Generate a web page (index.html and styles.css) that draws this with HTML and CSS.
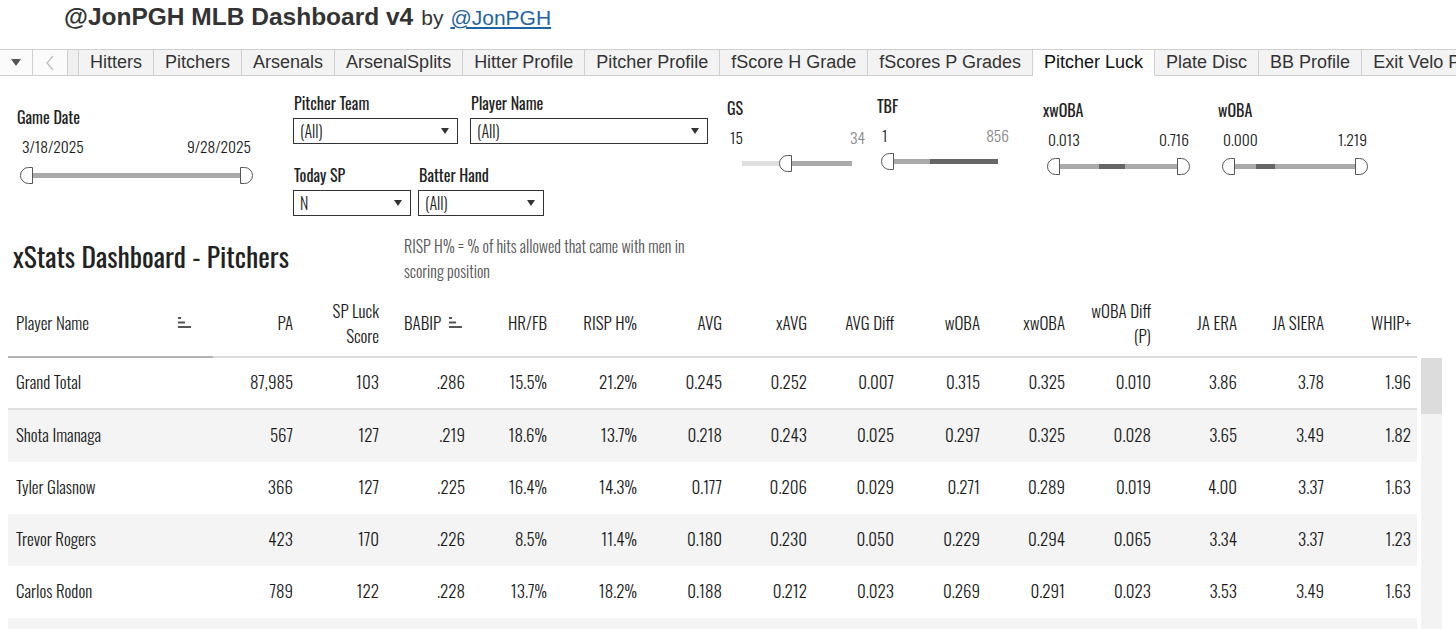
FILE: index.html
```html
<!DOCTYPE html>
<html>
<head>
<meta charset="utf-8">
<title>@JonPGH MLB Dashboard v4</title>
<link rel="stylesheet" href="styles.css">
</head>
<body>
<div class="title">
  <span class="t-main">@JonPGH MLB Dashboard v4</span><span class="t-by">by</span><a class="t-link" href="#">@JonPGH</a>
</div>

<div class="tabbar">
  <div class="tb-ctl tb-menu">
    <svg width="10" height="8" viewBox="0 0 10 8"><path d="M0 0 H10 L5 7 Z" fill="#555"/></svg>
  </div>
  <div class="tb-ctl tb-prev">
    <svg width="8" height="16" viewBox="0 0 8 16"><path d="M7 1 L1 8 L7 15" fill="none" stroke="#bbb" stroke-width="1.2"/></svg>
  </div>
  <div class="tb-gap"></div>
  <div class="tab">Hitters</div>
  <div class="tab">Pitchers</div>
  <div class="tab">Arsenals</div>
  <div class="tab">ArsenalSplits</div>
  <div class="tab">Hitter Profile</div>
  <div class="tab">Pitcher Profile</div>
  <div class="tab">fScore H Grade</div>
  <div class="tab">fScores P Grades</div>
  <div class="tab active">Pitcher Luck</div>
  <div class="tab">Plate Disc</div>
  <div class="tab">BB Profile</div>
  <div class="tab">Exit Velo Profile</div>
</div>

<div class="filters">
  <div class="f-date">
    <div class="f-label">Game Date</div>
    <div class="f-vals"><span>3/18/2025</span><span>9/28/2025</span></div>
    <div class="slider date-slider">
      <svg class="h" viewBox="0 0 13 17"><path d="M12.5 0.5 H8.5 A8 8 0 0 0 8.5 16.5 H12.5 Z" fill="#fff" stroke="#555"/></svg>
      <div class="trk grow"></div>
      <svg class="h" viewBox="0 0 13 17"><path d="M0.5 0.5 H4.5 A8 8 0 0 1 4.5 16.5 H0.5 Z" fill="#fff" stroke="#555"/></svg>
    </div>
  </div>

  <div class="f-drops">
    <div class="d-row d-row1">
      <div class="dd dd-team">
        <div class="f-label">Pitcher Team</div>
        <div class="dbox"><span>(All)</span><span class="arr"></span></div>
      </div>
      <div class="dd dd-player">
        <div class="f-label">Player Name</div>
        <div class="dbox"><span>(All)</span><span class="arr"></span></div>
      </div>
    </div>
    <div class="d-row d-row2">
      <div class="dd dd-sp">
        <div class="f-label">Today SP</div>
        <div class="dbox"><span>N</span><span class="arr"></span></div>
      </div>
      <div class="dd dd-hand">
        <div class="f-label">Batter Hand</div>
        <div class="dbox"><span>(All)</span><span class="arr"></span></div>
      </div>
    </div>
  </div>

  <div class="f-range f-gs">
    <div class="f-label">GS</div>
    <div class="f-vals"><span>15</span><span class="muted">34</span></div>
    <div class="slider">
      <div class="trk light" style="width:37px"></div>
      <svg class="h" viewBox="0 0 13 17"><path d="M12.5 0.5 H8.5 A8 8 0 0 0 8.5 16.5 H12.5 Z" fill="#fff" stroke="#555"/></svg>
      <div class="trk" style="width:60px"></div>
    </div>
  </div>

  <div class="f-range f-tbf">
    <div class="f-label">TBF</div>
    <div class="f-vals"><span>1</span><span class="muted">856</span></div>
    <div class="slider">
      <svg class="h" viewBox="0 0 13 17"><path d="M12.5 0.5 H8.5 A8 8 0 0 0 8.5 16.5 H12.5 Z" fill="#fff" stroke="#555"/></svg>
      <div class="trk" style="width:36px"></div>
      <div class="trk dark" style="width:68px"></div>
    </div>
  </div>

  <div class="f-range f-xw">
    <div class="f-label">xwOBA</div>
    <div class="f-vals"><span>0.013</span><span>0.716</span></div>
    <div class="slider">
      <svg class="h" viewBox="0 0 13 17"><path d="M12.5 0.5 H8.5 A8 8 0 0 0 8.5 16.5 H12.5 Z" fill="#fff" stroke="#555"/></svg>
      <div class="trk" style="width:39px"></div>
      <div class="trk dark" style="width:26px"></div>
      <div class="trk" style="width:52px"></div>
      <svg class="h" viewBox="0 0 13 17"><path d="M0.5 0.5 H4.5 A8 8 0 0 1 4.5 16.5 H0.5 Z" fill="#fff" stroke="#555"/></svg>
    </div>
  </div>

  <div class="f-range f-w">
    <div class="f-label">wOBA</div>
    <div class="f-vals"><span>0.000</span><span>1.219</span></div>
    <div class="slider">
      <svg class="h" viewBox="0 0 13 17"><path d="M12.5 0.5 H8.5 A8 8 0 0 0 8.5 16.5 H12.5 Z" fill="#fff" stroke="#555"/></svg>
      <div class="trk" style="width:21px"></div>
      <div class="trk dark" style="width:19px"></div>
      <div class="trk" style="width:80px"></div>
      <svg class="h" viewBox="0 0 13 17"><path d="M0.5 0.5 H4.5 A8 8 0 0 1 4.5 16.5 H0.5 Z" fill="#fff" stroke="#555"/></svg>
    </div>
  </div>
</div>

<div class="section">
  <h1 class="sec-title">xStats Dashboard - Pitchers</h1>
  <p class="sec-note">RISP H% = % of hits allowed that came with men in<br>scoring position</p>
</div>

<div class="tablewrap">
  <div class="table">
    <div class="row head">
      <div class="c name hname"><span>Player Name</span><svg class="sort" viewBox="0 0 13 12"><rect x="0" y="0" width="3" height="2"/><rect x="0" y="4.5" width="7" height="2"/><rect x="0" y="9" width="13" height="2"/></svg></div>
      <div class="c">PA</div>
      <div class="c">SP Luck<br>Score</div>
      <div class="c babip"><span>BABIP</span><svg class="sort" viewBox="0 0 13 12"><rect x="0" y="0" width="3" height="2"/><rect x="0" y="4.5" width="7" height="2"/><rect x="0" y="9" width="13" height="2"/></svg></div>
      <div class="c">HR/FB</div>
      <div class="c">RISP H%</div>
      <div class="c">AVG</div>
      <div class="c">xAVG</div>
      <div class="c">AVG Diff</div>
      <div class="c">wOBA</div>
      <div class="c">xwOBA</div>
      <div class="c">wOBA Diff<br>(P)</div>
      <div class="c">JA ERA</div>
      <div class="c">JA SIERA</div>
      <div class="c">WHIP+</div>
    </div>
    <div class="row total">
      <div class="c name">Grand Total</div>
      <div class="c">87,985</div><div class="c">103</div><div class="c">.286</div><div class="c">15.5%</div><div class="c">21.2%</div><div class="c">0.245</div><div class="c">0.252</div><div class="c">0.007</div><div class="c">0.315</div><div class="c">0.325</div><div class="c">0.010</div><div class="c">3.86</div><div class="c">3.78</div><div class="c">1.96</div>
    </div>
    <div class="row alt">
      <div class="c name">Shota Imanaga</div>
      <div class="c">567</div><div class="c">127</div><div class="c">.219</div><div class="c">18.6%</div><div class="c">13.7%</div><div class="c">0.218</div><div class="c">0.243</div><div class="c">0.025</div><div class="c">0.297</div><div class="c">0.325</div><div class="c">0.028</div><div class="c">3.65</div><div class="c">3.49</div><div class="c">1.82</div>
    </div>
    <div class="row">
      <div class="c name">Tyler Glasnow</div>
      <div class="c">366</div><div class="c">127</div><div class="c">.225</div><div class="c">16.4%</div><div class="c">14.3%</div><div class="c">0.177</div><div class="c">0.206</div><div class="c">0.029</div><div class="c">0.271</div><div class="c">0.289</div><div class="c">0.019</div><div class="c">4.00</div><div class="c">3.37</div><div class="c">1.63</div>
    </div>
    <div class="row alt">
      <div class="c name">Trevor Rogers</div>
      <div class="c">423</div><div class="c">170</div><div class="c">.226</div><div class="c">8.5%</div><div class="c">11.4%</div><div class="c">0.180</div><div class="c">0.230</div><div class="c">0.050</div><div class="c">0.229</div><div class="c">0.294</div><div class="c">0.065</div><div class="c">3.34</div><div class="c">3.37</div><div class="c">1.23</div>
    </div>
    <div class="row">
      <div class="c name">Carlos Rodon</div>
      <div class="c">789</div><div class="c">122</div><div class="c">.228</div><div class="c">13.7%</div><div class="c">18.2%</div><div class="c">0.188</div><div class="c">0.212</div><div class="c">0.023</div><div class="c">0.269</div><div class="c">0.291</div><div class="c">0.023</div><div class="c">3.53</div><div class="c">3.49</div><div class="c">1.63</div>
    </div>
    <div class="row alt"></div>
  </div>
  <div class="vscroll"><div class="thumb"></div></div>
</div>
</body>
</html>
```
FILE: styles.css
```css
* { box-sizing: border-box; }
html, body { margin: 0; padding: 0; background: #fff; }
body {
  font-family: "Oswald", "Roboto Condensed", sans-serif;
  font-weight: 300;
  color: #1a1a1a;
  overflow: hidden;
  height: 629px;
}

/* title */
.title {
  height: 34px;
  line-height: 34px;
  padding-left: 64px;
  font-family: "Liberation Sans", Arial, sans-serif;
  color: #333;
  white-space: nowrap;
}
.t-main { font-weight: bold; font-size: 24.5px; }
.t-by { font-size: 21px; margin-left: 8px; }
.t-link { font-size: 21px; color: #1f62a5; text-decoration: underline; margin-left: 7px; }

/* tabs */
.tabbar {
  margin-top: 15px;
  height: 27px;
  display: flex;
  font-family: "Liberation Sans", Arial, sans-serif;
  font-size: 18px;
  color: #333;
  white-space: nowrap;
  overflow: hidden;
  font-weight: normal;
}
.tb-ctl, .tb-gap, .tab {
  display: flex;
  align-items: center;
  justify-content: center;
  border-top: 1px solid #cfcfcf;
  border-bottom: 1px solid #cfcfcf;
  border-right: 1px solid #cfcfcf;
  flex: none;
}
.tb-ctl { width: 33px; background: #fbfbfb; }
.tb-prev { width: 35px; }
.tb-gap { width: 11px; background: #f0f0f0; }
.tab { padding: 0 11px; background: #f3f3f3; }
.tab.active { background: #fff; border-bottom-color: #fff; color: #111; }

/* filters */
.filters {
  height: 154px;
  display: flex;
  align-items: flex-start;
}
.f-label { font-size: 16px; font-weight: 400; line-height: 20px; color: #222; white-space: nowrap; }
.f-vals { display: flex; justify-content: space-between; font-size: 15.5px; line-height: 20px; white-space: nowrap; }
.muted { color: #888; }

.f-date { margin-left: 17px; width: 236px; padding-top: 31px; }
.f-date .f-vals { margin-top: 9px; padding: 0 2px 0 5px; }
.date-slider { margin-top: 11px; margin-left: 3px; }

.slider { display: flex; align-items: center; height: 17px; }
.h { width: 13px; height: 17px; flex: none; display: block; }
.trk { height: 5px; background: #aaa; flex: none; }
.trk.grow { flex: 1; }
.trk.light { background: #dedede; }
.trk.dark { background: #666; }

.f-drops { margin-left: 40px; width: 420px; padding-top: 17px; }
.d-row { display: flex; }
.d-row1 { gap: 12px; }
.d-row2 { gap: 7px; margin-top: 21px; }
.dd .f-label { padding-left: 1px; }
.dbox {
  margin-top: 5px;
  height: 26px;
  border: 1px solid #333;
  display: flex;
  align-items: center;
  justify-content: space-between;
  padding: 0 8px 0 6px;
  font-size: 16px;
  font-weight: 300;
}
.arr {
  width: 0; height: 0;
  border-left: 4px solid transparent;
  border-right: 4px solid transparent;
  border-top: 6px solid #333;
}
.dd-team .dbox { width: 165px; }
.dd-player .dbox { width: 238px; }
.dd-sp .dbox { width: 118px; }
.dd-hand .dbox { width: 126px; }

.f-range .f-vals { margin-top: 9px; }
.f-gs { margin-left: 14px; width: 138px; padding-top: 22px; }
.f-gs .f-vals { padding-left: 3px; }
.f-gs .slider { margin-top: 8px; margin-left: 15px; }
.f-tbf { margin-left: 12px; width: 132px; padding-top: 20px; }
.f-tbf .f-vals { padding-left: 5px; }
.f-tbf .slider { margin-top: 8px; margin-left: 4px; }
.f-xw { margin-left: 34px; width: 148px; padding-top: 24px; }
.f-xw .f-vals { padding: 0 2px 0 5px; }
.f-xw .slider { margin-top: 9px; margin-left: 4px; }
.f-w { margin-left: 27px; width: 151px; padding-top: 24px; }
.f-w .f-vals { padding: 0 2px 0 5px; }
.f-w .slider { margin-top: 9px; margin-left: 4px; }

/* section */
.section { height: 64px; display: flex; align-items: flex-start; }
.sec-title {
  margin: 6px 0 0 13px;
  width: 391px;
  font-size: 27.5px;
  font-weight: 400;
  line-height: 40px;
  color: #222;
  white-space: nowrap;
}
.sec-note {
  margin: 4px 0 0 0;
  font-size: 16px;
  line-height: 25px;
  color: #555;
  font-weight: 300;
  white-space: nowrap;
}

/* table */
.tablewrap { display: flex; margin-left: 8px; }
.table { width: 1409px; }
.row {
  display: grid;
  grid-template-columns: 205px 86px 86px 86px 82px 90px 85px 85px 87px 86px 85px 86px 86px 87px 87px;
  height: 52px;
  font-size: 17px;
  line-height: 25px;
}
.row.alt { background: #f4f4f4; }
.c {
  display: flex;
  align-items: center;
  justify-content: flex-end;
  text-align: right;
  padding-right: 6px;
  padding-bottom: 3px;
  white-space: nowrap;
}
.c.name { justify-content: flex-start; padding-left: 8px; text-align: left; }
.row.head { height: 64px; border-bottom: 2px solid #dcdcdc; }
.row.head .c { padding-bottom: 5px; }
.row.head .hname { justify-content: space-between; padding-right: 22px; border-bottom: 2px solid #b3b3b3; margin-bottom: -2px; }
.row.head .babip { justify-content: flex-start; padding-left: 19px; gap: 8px; }
.sort { width: 13px; height: 12px; fill: #555; flex: none; }
.row.total { border-bottom: 2px solid #e0e0e0; height: 52px; }

.vscroll { width: 21px; margin-left: 4px; margin-top: 64px; background: #f3f3f3; height: 300px; }
.thumb { height: 56px; background: #dcdcdc; }
```
